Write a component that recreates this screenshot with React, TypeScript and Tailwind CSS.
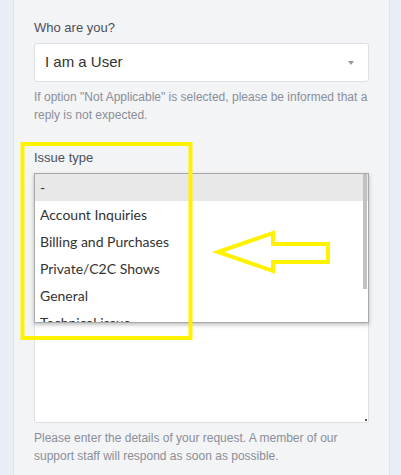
import React from "react";

const options = [
  "-",
  "Account Inquiries",
  "Billing and Purchases",
  "Private/C2C Shows",
  "General",
  "Technical issue",
];

function Annotation() {
  return (
    <svg
      className="pointer-events-none absolute left-0 top-0"
      width={401}
      height={475}
      viewBox="0 0 401 475"
    >
      <rect x={22.5} y={144} width={168} height={194} fill="none" stroke="#fff200" strokeWidth={4} />
      <polygon
        points="218,252 273,233 273,244 328,244 328,262 273,262 273,271"
        fill="none"
        stroke="#fff200"
        strokeWidth={4}
        strokeLinejoin="miter"
      />
    </svg>
  );
}

export default function App() {
  return (
    <div
      className="relative flex h-[475px] w-[401px] overflow-hidden bg-[#e9eef6] pl-[13px]"
      style={{ fontFamily: '"Liberation Sans", Arial, sans-serif' }}
    >
      <div className="w-[377px] shrink-0 border-x border-[#dfe3e9] bg-[#f3f4f6] px-5 pt-[19px]">
        <label className="block text-[13px] leading-[18px] text-[#4b505b]">Who are you?</label>
        <div className="relative mt-[6px] flex h-[39px] items-center rounded-[3px] border border-[#dcdfe4] bg-white pl-[10px]">
          <span className="text-[15px] text-[#333]">I am a User</span>
          <span className="absolute right-[14px] top-[17px] h-0 w-0 border-x-[3px] border-t-[4px] border-x-transparent border-t-[#999]" />
        </div>
        <p className="mt-[6px] text-[12px] leading-[18px] text-[#8a8e99]">
          If option "Not Applicable" is selected, please be informed that a reply is not expected.
        </p>

        <label className="mt-[25px] block text-[13px] leading-[18px] text-[#4b505b]">Issue type</label>
        <div className="relative mt-[6px] h-[250px] rounded-[2px] border border-[#dcdfe4] bg-white">
          <span className="absolute bottom-[1px] right-[1px] h-[2px] w-[2px] bg-[#555]" />
          <div
            className="absolute -left-px -right-px -top-px h-[150px] overflow-hidden border border-[#a9a9a9] bg-white shadow-[0_2px_4px_rgba(0,0,0,0.25)]"
            style={{ fontFamily: 'Lato, "Open Sans", sans-serif' }}
          >
            {options.map((o, i) => (
              <div
                key={o}
                className={
                  i === 0
                    ? "flex h-[27px] items-center bg-[#e8e8e8] pl-[5px] text-[14px] text-[#333]"
                    : "flex h-[27px] items-center pl-[5px] text-[14px] text-[#333]"
                }
              >
                {o}
              </div>
            ))}
            <span className="absolute right-[1px] top-0 h-[115px] w-[4px] bg-[#c1c1c1]" />
          </div>
        </div>
        <p className="mt-[6px] text-[12px] leading-[18px] text-[#8a8e99]">
          Please enter the details of your request. A member of our support staff will respond as soon as possible.
        </p>
      </div>
      <Annotation />
    </div>
  );
}
